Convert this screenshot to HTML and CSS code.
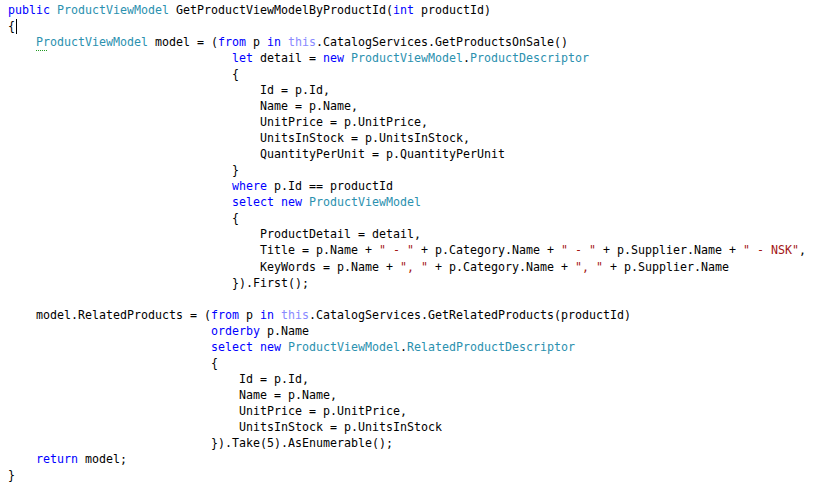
FILE: index.html
```html
<!DOCTYPE html>
<html>
<head>
<meta charset="utf-8">
<link rel="stylesheet" href="styles.css">
</head>
<body>
<div class="code">
<div class="ln"><span class="kw">public</span> <span class="ty">ProductViewModel</span> GetProductViewModelByProductId(<span class="kw">int</span> productId)</div>
<div class="ln">{<span class="caret"></span></div>
<div class="ln">    <span class="ty"><span class="squig">Pr</span>oductViewModel</span> model = (<span class="kw">from</span> p <span class="kw">in</span> <span class="th">this</span>.CatalogServices.GetProductsOnSale()</div>
<div class="ln">                                <span class="kw">let</span> detail = <span class="kw">new</span> <span class="ty">ProductViewModel</span>.<span class="ty">ProductDescriptor</span></div>
<div class="ln">                                {</div>
<div class="ln">                                    Id = p.Id,</div>
<div class="ln">                                    Name = p.Name,</div>
<div class="ln">                                    UnitPrice = p.UnitPrice,</div>
<div class="ln">                                    UnitsInStock = p.UnitsInStock,</div>
<div class="ln">                                    QuantityPerUnit = p.QuantityPerUnit</div>
<div class="ln">                                }</div>
<div class="ln">                                <span class="kw">where</span> p.Id == productId</div>
<div class="ln">                                <span class="kw">select</span> <span class="kw">new</span> <span class="ty">ProductViewModel</span></div>
<div class="ln">                                {</div>
<div class="ln">                                    ProductDetail = detail,</div>
<div class="ln">                                    Title = p.Name + <span class="st">" - "</span> + p.Category.Name + <span class="st">" - "</span> + p.Supplier.Name + <span class="st">" - NSK"</span>,</div>
<div class="ln">                                    KeyWords = p.Name + <span class="st">", "</span> + p.Category.Name + <span class="st">", "</span> + p.Supplier.Name</div>
<div class="ln">                                }).First();</div>
<div class="ln"></div>
<div class="ln">    model.RelatedProducts = (<span class="kw">from</span> p <span class="kw">in</span> <span class="th">this</span>.CatalogServices.GetRelatedProducts(productId)</div>
<div class="ln">                             <span class="kw">orderby</span> p.Name</div>
<div class="ln">                             <span class="kw">select</span> <span class="kw">new</span> <span class="ty">ProductViewModel</span>.<span class="ty">RelatedProductDescriptor</span></div>
<div class="ln">                             {</div>
<div class="ln">                                 Id = p.Id,</div>
<div class="ln">                                 Name = p.Name,</div>
<div class="ln">                                 UnitPrice = p.UnitPrice,</div>
<div class="ln">                                 UnitsInStock = p.UnitsInStock</div>
<div class="ln">                             }).Take(5).AsEnumerable();</div>
<div class="ln">    <span class="kw">return</span> model;</div>
<div class="ln">}</div>
</div>
</body>
</html>
```
FILE: styles.css
```css
html, body {
  margin: 0;
  padding: 0;
  background: #ffffff;
}

.code {
  display: flex;
  flex-direction: column;
  padding: 2px 0 0 8px;
  font-family: "DejaVu Sans Mono", monospace;
  font-size: 11.63px;
  line-height: 16.04px;
  color: #000000;
}

.ln {
  white-space: pre;
  height: 16.04px;
}

.kw { color: #0000ff; }
.ty { color: #2b91af; }
.st { color: #a31515; }
.th { color: #8a8aff; }

.caret {
  display: inline-block;
  width: 1px;
  height: 15px;
  background: #000000;
  vertical-align: -4px;
  margin-left: 1px;
}

.squig {
  position: relative;
}

.squig::after {
  content: "";
  position: absolute;
  left: 0;
  width: 11px;
  bottom: -2px;
  border-bottom: 1px dotted #1f9a1f;
}
```
